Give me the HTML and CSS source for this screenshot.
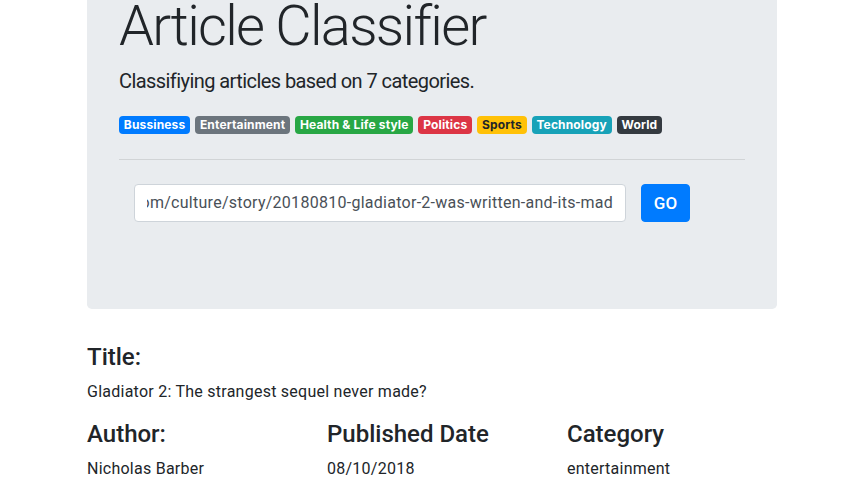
FILE: index.html
```html
<!DOCTYPE html>
<html lang="en">
<head>
<meta charset="utf-8">
<title>Article Classifier</title>
<link rel="stylesheet" href="styles.css">
</head>
<body>
<div class="container">
  <div class="jumbotron">
    <h1 class="display">Article Classifier</h1>
    <p class="lead">Classifiying articles based on 7 categories.</p>
    <div class="badges">
      <span class="badge b-primary">Bussiness</span>
      <span class="badge b-secondary">Entertainment</span>
      <span class="badge b-success">Health &amp; Life style</span>
      <span class="badge b-danger">Politics</span>
      <span class="badge b-warning">Sports</span>
      <span class="badge b-info">Technology</span>
      <span class="badge b-dark">World</span>
    </div>
    <hr class="rule">
    <form class="url-form">
      <div class="input"><span class="input-text">http://www.bbc.com/culture/story/20180810-gladiator-2-was-written-and-its-mad</span></div>
      <button type="button" class="btn">GO</button>
    </form>
  </div>
  <section class="result">
    <h4 class="label">Title:</h4>
    <p class="value">Gladiator 2: The strangest sequel never made?</p>
    <div class="meta">
      <div class="col">
        <h4 class="label">Author:</h4>
        <p class="value">Nicholas Barber</p>
      </div>
      <div class="col">
        <h4 class="label">Published Date</h4>
        <p class="value">08/10/2018</p>
      </div>
      <div class="col">
        <h4 class="label">Category</h4>
        <p class="value">entertainment</p>
      </div>
    </div>
  </section>
</div>
</body>
</html>
```
FILE: styles.css
```css
* { box-sizing: border-box; }
html, body { margin: 0; padding: 0; }
body {
  font-family: Roboto, "Noto Sans", "Liberation Sans", sans-serif;
  font-size: 16px;
  line-height: 1.5;
  color: #212529;
  background: #fff;
  overflow: hidden;
}
.container {
  width: 720px;
  margin-left: 87px;
}
.jumbotron {
  width: 690px;
  background: #e9ecef;
  border-radius: 0 0 4.8px 4.8px;
  padding: 0 32px 64px;
  margin-bottom: 34px;
}
.display {
  margin: -7px 0 8px;
  font-size: 56px;
  font-weight: 300;
  line-height: 1.2;
  letter-spacing: -1.7px;
}
.lead {
  margin: 0 0 22px;
  font-size: 20px;
  font-weight: 400;
  line-height: 26px;
  letter-spacing: -0.57px;
}
.badges {
  display: flex;
  gap: 5px;
}
.badge {
  display: inline-block;
  font-family: Inter, Roboto, sans-serif;
  font-size: 12px;
  font-weight: 700;
  line-height: 12px;
  padding: 3px 4.8px;
  border-radius: 4px;
  color: #fff;
  white-space: nowrap;
  letter-spacing: 0.15px;
}
.b-primary { background: #007bff; }
.b-secondary { background: #6c757d; }
.b-success { background: #28a745; }
.b-danger { background: #dc3545; }
.b-warning { background: #ffc107; color: #212529; }
.b-info { background: #17a2b8; }
.b-dark { background: #343a40; }
.rule {
  margin: 25px 0 0;
  border: 0;
  border-top: 1px solid rgba(0,0,0,.1);
  height: 0;
}
.url-form {
  display: flex;
  gap: 15px;
  padding-left: 15px;
  margin: 24px 0 23px;
}
.input {
  width: 492px;
  height: 38px;
  padding: 6px 12px;
  border: 1px solid #ced4da;
  border-radius: 4px;
  background: #fff;
  display: flex;
}
.input-text {
  flex: 1;
  overflow: hidden;
  display: flex;
  justify-content: flex-end;
  white-space: nowrap;
  color: #495057;
  font-size: 16px;
  line-height: 24px;
  letter-spacing: 0.27px;
}
.btn {
  width: 49px;
  height: 38px;
  border: 1px solid #007bff;
  background: #007bff;
  color: #fff;
  border-radius: 4px;
  font-family: inherit;
  font-size: 17px;
  font-weight: 500;
  padding: 0;
}
.label {
  margin: 0 0 8px;
  font-size: 24px;
  font-weight: 500;
  line-height: 1.2;
}
.value {
  margin: 0 0 16px;
  font-size: 16px;
  line-height: 24px;
  letter-spacing: 0.25px;
}
.meta {
  display: flex;
}
.col { width: 240px; }
```
